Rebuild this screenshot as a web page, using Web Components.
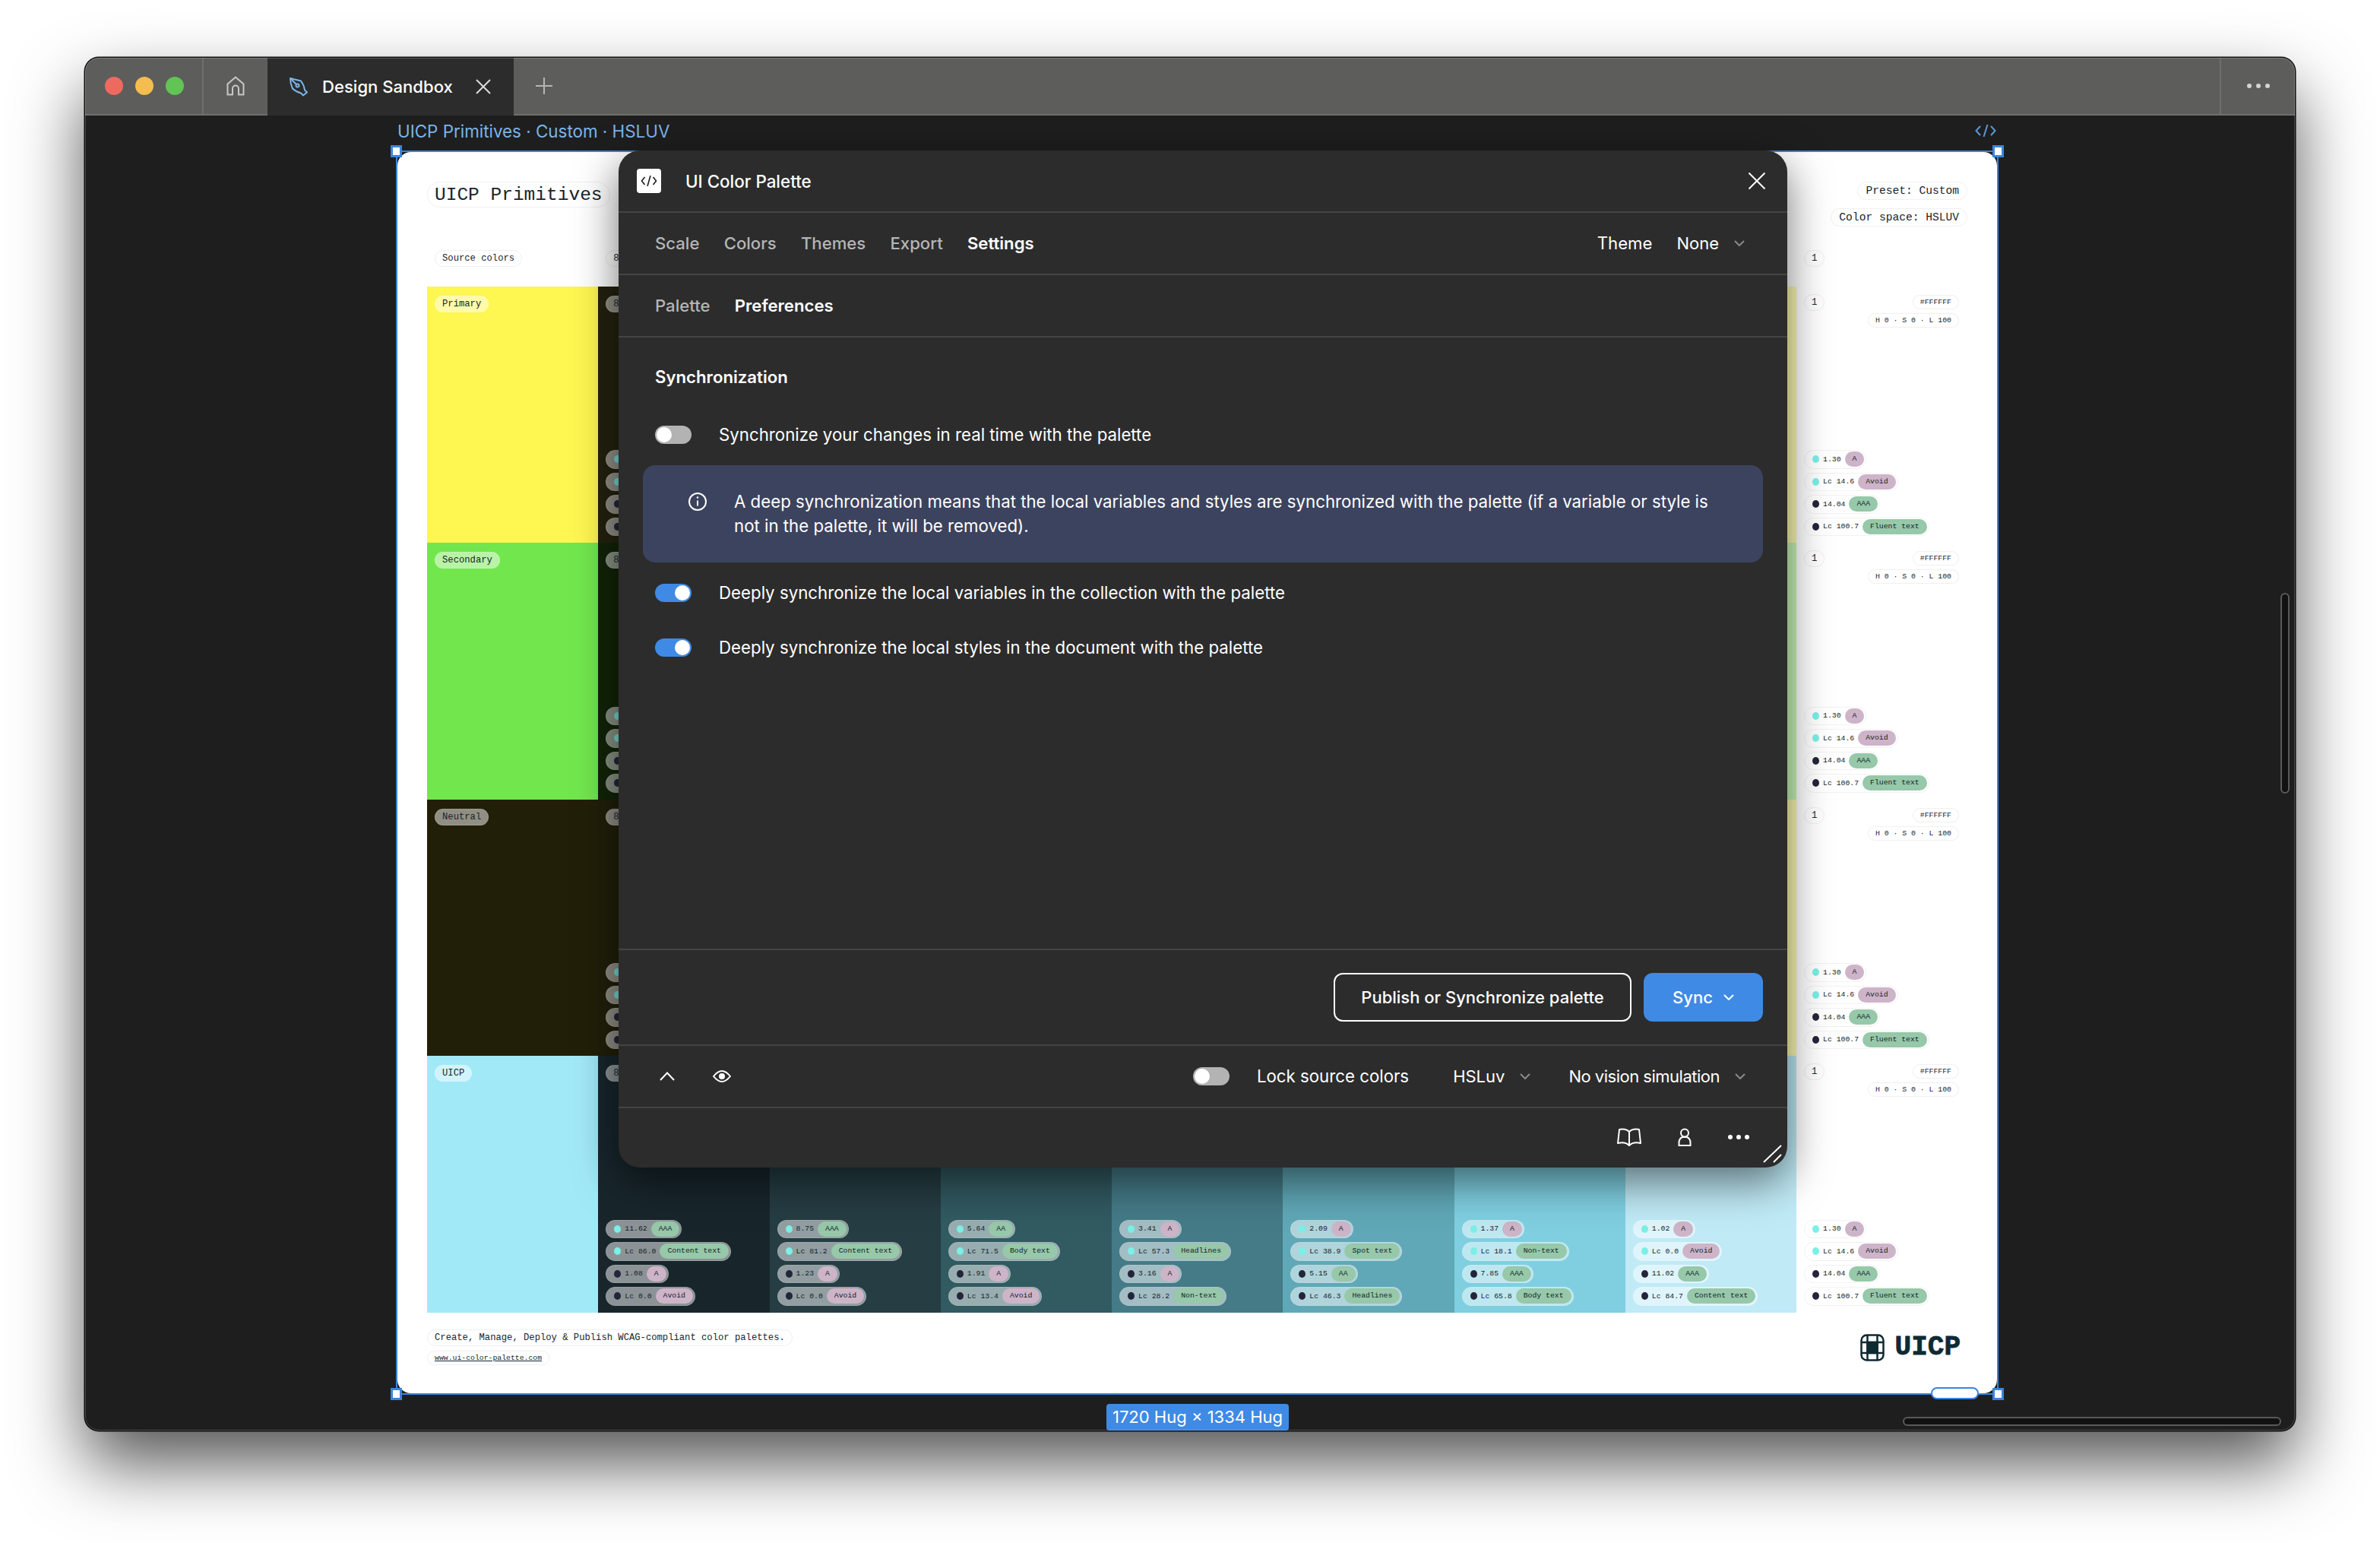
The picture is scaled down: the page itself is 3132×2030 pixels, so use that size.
<!DOCTYPE html>
<html lang="en"><head><meta charset="utf-8"><title>Design Sandbox</title>
<style>html,body{margin:0;padding:0;background:#fff}body{font-family:Inter,"Noto Sans",sans-serif}</style>
<script>
const chev=(c='#8a8a8a')=>`<svg width="14" height="8" viewBox="0 0 14 8" fill="none" stroke="${c}" stroke-width="2"><path d="M1 1l6 6 6-6"/></svg>`;
function define(name,css,render){customElements.define(name,class extends HTMLElement{connectedCallback(){if(this.shadowRoot)return;const r=this.attachShadow({mode:'open'});r.innerHTML=`<style>${css}</style>`+render(this)}})}

define('ui-desktop',`:host{display:block;width:3132px;height:2030px;box-sizing:border-box;padding:76px 0 0 112px;background:#fff;overflow:hidden}`,()=>`<slot></slot>`);

define('ui-window',`:host{display:flex;flex-direction:column;position:relative;width:2908px;height:1806px;background:#1e1e1e;border-radius:18px;box-shadow:0 0 0 1.5px #111,0 44px 90px rgba(0,0,0,.67)}
.rim{position:absolute;inset:0;border-radius:18px;border:1.5px solid rgba(255,255,255,.2);pointer-events:none;z-index:9}`,()=>`<slot></slot><div class="rim"></div>`);

define('ui-tabbar',`:host{display:flex;align-items:stretch;height:76px;box-sizing:border-box;background:#5d5d5c;border-bottom:2px solid #6f6f6e;border-radius:18px 18px 0 0;flex:none;color:#fff}
.lights{display:flex;align-items:center;gap:16px;padding-left:26px;width:156px;box-sizing:border-box;border-right:2px solid #6f6f6e}
.lights i{width:24px;height:24px;border-radius:50%;display:block}
.home{width:84px;display:flex;align-items:center;justify-content:center}
.tab{display:flex;align-items:center;width:324px;box-sizing:border-box;padding-left:28px;background:#2c2c2c;margin-bottom:-2px;font:500 22.1px Inter,sans-serif}
.tab span{margin-left:18px;width:172px;white-space:nowrap}
.tab svg:last-child{margin-left:30px}
.plus{margin-left:29px;display:flex;align-items:center}
.more{margin-left:auto;width:97px;border-left:2px solid #6f6f6e;display:flex;align-items:center;justify-content:center;gap:6px}
.more i{width:6px;height:6px;border-radius:50%;background:#d4d4d4}`,()=>`
<div class="lights"><i style="background:#ee6a5f"></i><i style="background:#f5bd4f"></i><i style="background:#61c454"></i></div>
<div class="home"><svg width="24" height="26" viewBox="0 0 24 26" fill="none" stroke="#c8c8c8" stroke-width="2"><path d="M1.5 24.5V10.5L12 1.5l10.5 9v14H16v-8a4 4 0 0 0-8 0v8z"/></svg></div>
<div class="tab"><svg width="26" height="26" viewBox="0 0 26 26" fill="none" stroke="#7ab6ec" stroke-width="2" stroke-linejoin="round"><path d="M2 2l14 3.5c3 4 4.500 8 5 12l3 3-5 4-3-3c-4-1-8-3-11-6C3 11 2 7 2 2z"/><path d="M2 2l8 8"/><circle cx="11.500" cy="11.500" r="2"/></svg><span>Design Sandbox</span><svg width="20" height="20" viewBox="0 0 20 20" stroke="#dcdcdc" stroke-width="2"><path d="M1 1l18 18M19 1L1 19"/></svg></div>
<div class="plus"><svg width="22" height="22" viewBox="0 0 22 22" stroke="#b5b5b5" stroke-width="2"><path d="M11 0v22M0 11h22"/></svg></div>
<div class="more"><i></i><i></i><i></i></div>`);

define('ui-canvas',`:host{display:block;position:relative;flex:1;padding-left:409px;overflow:visible}
.label{display:flex;justify-content:space-between;align-items:center;width:2110px;height:40px;margin-bottom:6px;padding-right:4px;box-sizing:border-box;color:#7ab4ea;font:400 22.4px Inter,sans-serif;padding-left:2px}
.label svg{display:block;margin-right:0}
.wrap{width:2110px}
.badge{display:table;margin:12px auto 0;background:#3f8ae5;color:#fff;font:400 22px/35px Inter,sans-serif;padding:0 8px;border-radius:4px;white-space:nowrap}
.vs,.hs{position:absolute;background:#111;border:2px solid #5a5a5a;box-sizing:border-box;border-radius:7px}
.vs{left:2889px;top:628px;width:12px;height:264px}
.hs{left:2392px;top:1712px;width:498px;height:12px}`,()=>`<div class="wrap"><div class="label"><span>UICP Primitives · Custom · HSLUV</span><svg width="28" height="16" viewBox="0 0 28 16" fill="none" stroke="#5a98d8" stroke-width="2"><path d="M7 2L1.500 8 7 14M21 2l5.500 6L21 14M16.500 0l-5 16"/></svg></div><slot name="frame"></slot><div class="badge">1720 Hug × 1334 Hug</div></div><slot></slot><div class="vs"></div><div class="hs"></div>`);

define('ui-frame',`:host{display:block;position:relative;width:2109px;height:1637px;box-sizing:border-box;border:2.500px solid #3b84e0}
.h{position:absolute;width:15px;height:16px;background:#fff;border:3px solid #3b84e0;box-sizing:border-box;z-index:3}
.tl{left:-9px;top:-9px}.tr{right:-9px;top:-9px}.bl{left:-9px;bottom:-9px}.br{right:-9px;bottom:-9px}
.p{position:absolute;right:24px;bottom:-8px;width:63px;height:16px;background:#fff;border:2.500px solid #3b84e0;box-sizing:border-box;border-radius:9px;z-index:3}`,()=>`<slot></slot><div class="h tl"></div><div class="h tr"></div><div class="h bl"></div><div class="h br"></div><div class="p"></div>`);

define('ui-pill',`:host{display:inline-flex;align-items:center;box-sizing:border-box;height:22px;padding:0 9px;border-radius:11px;font:400 12.2px "Liberation Mono",monospace;color:#16262c;white-space:nowrap;background:var(--pill-bg,#fff);border:1px solid var(--pill-bd,#f0f0f0)}
:host([size=big]){font-size:24.5px;height:34px;border-radius:17px;padding:0 9px}
:host([size=mid]){font-size:14.600px;height:24px;border-radius:12px;padding:0 10px}
:host([size=sm]){font-size:9.800px;height:19px;border-radius:10px;padding:0 9px}
:host([tint]){--pill-bg:rgba(255,255,255,.5);--pill-bd:rgba(255,255,255,.12)}
:host([wide]){min-width:60px}`,()=>`<slot></slot>`);

define('ui-chip',`:host{display:inline-flex;align-self:flex-start;align-items:center;box-sizing:border-box;height:24.500px;padding:0 2px 0 10px;border-radius:12.500px;background:rgba(255,255,255,.5);border:1px solid rgba(255,255,255,.1);font:400 9.800px "Liberation Mono",monospace;color:#14222a;white-space:nowrap}
:host([solid]){background:#fff;border-color:#f2f2f2}
.d{width:9px;height:10px;border-radius:50%;flex:none;margin-right:5px}
.v{margin-right:5px}
.t{height:20px;line-height:20px;padding:0 10px;border-radius:10px}
.b{width:60px;height:20px}`,h=>{const g=h.getAttribute('tag');const good=/AAA|AA|text|Headlines|Non-text/.test(g||'')&&g!=='A';const bg=good?'#96c8a9':'#ceb4c8';
if(!g)return `<i class="d" style="background:${h.getAttribute('dot')=='d'?'#24253a':'#6fdcd6'}"></i><span class="b"></span>`;
return `<i class="d" style="background:${h.getAttribute('dot')=='d'?'#24253a':'#7cefe6'}"></i><span class="v">${h.getAttribute('val')}</span><span class="t" style="background:${bg}">${g}</span>`});

const data=[
[['11.62','AAA'],['Lc 86.0','Content text'],['1.08','A'],['Lc 0.0','Avoid']],
[['8.75','AAA'],['Lc 81.2','Content text'],['1.23','A'],['Lc 0.0','Avoid']],
[['5.64','AA'],['Lc 71.5','Body text'],['1.91','A'],['Lc 13.4','Avoid']],
[['3.41','A'],['Lc 57.3','Headlines'],['3.16','A'],['Lc 28.2','Non-text']],
[['2.09','A'],['Lc 38.9','Spot text'],['5.15','AA'],['Lc 46.3','Headlines']],
[['1.37','A'],['Lc 18.1','Non-text'],['7.85','AAA'],['Lc 65.8','Body text']],
[['1.02','A'],['Lc 0.0','Avoid'],['11.02','AAA'],['Lc 84.7','Content text']]];
const white=[['1.30','A'],['Lc 14.6','Avoid'],['14.04','AAA'],['Lc 100.7','Fluent text']];
const rows=[
{n:'Primary',s:'#fef651',c:['#23220f','#3a3a18','#5c5a26','#8a8738','#b5b14a','#dcd75c','#fdfbb0']},
{n:'Secondary',s:'#72e74d',c:['#122408','#1f3a10','#2f5a1a','#458a26','#5ab532','#6cd53e','#c8f7b8']},
{n:'Neutral',s:'#221f08',c:['#211f0a','#3a3a18','#5c5a26','#8a8738','#b5b14a','#dcd75c','#fdfbb0']},
{n:'UICP',s:'#a2e9f8',c:['#18262c','#253d43','#315a61','#447b87','#60a8b7','#7fcfe1','#bfeaf6']}];
const chips=(arr,extra='')=>arr.map((x,i)=>`<ui-chip dot="${i<2?'l':'d'}" val="${x[0]}" tag="${x[1]}" ${extra}></ui-chip>`).join('');

define('palette-sheet',`:host{display:block;height:100%;box-sizing:border-box;background:#fff;border-radius:18px;padding:38px 39px 0;color:#16262c}
.top{display:flex;justify-content:space-between;align-items:flex-start;height:61px}
.top>ui-pill{margin-top:1px}
.right{display:flex;flex-direction:column;align-items:flex-end;gap:11px;margin-top:1px}
.grid{display:grid;grid-template-columns:repeat(8,225.25px) 225px;grid-template-rows:22px 27.500px repeat(4,337.500px);margin-top:28px}
.hd{padding-left:10px;grid-row:1}
.hd.last{grid-column:9}
.c{box-sizing:border-box;padding:10px;display:flex;flex-direction:column;justify-content:space-between;overflow:hidden;min-width:0}
.stack{display:flex;flex-direction:column;gap:5px;margin-bottom:-1px}
.head{display:flex;justify-content:space-between;align-items:flex-start;margin-right:1px}
.hexes{display:flex;flex-direction:column;align-items:flex-end;gap:5px;margin-top:1px}
.foot{display:flex;justify-content:space-between;margin-top:22px;width:2018px}
.fl{display:flex;flex-direction:column;align-items:flex-start;gap:6px}
.fl a{color:inherit;text-decoration:underline;font-size:9.800px}
.logo{display:flex;align-items:center;gap:14px;font:700 36px/36px "Liberation Mono",monospace;color:#0e2a33;margin-top:2px;-webkit-text-stroke:.8px #0e2a33}`,()=>{
let g=`<div class="hd" style="grid-column:1"><ui-pill>Source colors</ui-pill></div><div class="hd" style="grid-column:2"><ui-pill wide>8</ui-pill></div><div class="hd last"><ui-pill>1</ui-pill></div>`;
rows.forEach((r,ri)=>{
 const R=`grid-row:${ri+3};`;
 g+=`<div class="c" style="${R}grid-column:1;background:${r.s}"><div><ui-pill tint>${r.n}</ui-pill></div></div>`;
 r.c.forEach((col,ci)=>{
  const isLast=ri===3;
  let inner='';
  if(ci===0) inner+=`<div><ui-pill tint wide>8</ui-pill></div>`; else inner+='<div></div>';
  if(isLast) inner+=`<div class="stack">${chips(data[ci])}</div>`;
  else if(ci===0) inner+=`<div class="stack">${[0,1,2,3].map(i=>`<ui-chip dot="${i<2?'l':'d'}"></ui-chip>`).join('')}</div>`;
  g+=`<div class="c" style="${R}grid-column:${ci+2};background:${col}">${inner}</div>`;
 });
 g+=`<div class="c" style="${R}grid-column:9"><div class="head"><ui-pill>1</ui-pill><div class="hexes"><ui-pill size="sm">#FFFFFF</ui-pill><ui-pill size="sm">H 0 · S 0 · L 100</ui-pill></div></div><div class="stack">${chips(white,'solid')}</div></div>`;
});
return `<div class="top"><ui-pill size="big">UICP Primitives</ui-pill><div class="right"><ui-pill size="mid">Preset: Custom</ui-pill><ui-pill size="mid">Color space: HSLUV</ui-pill></div></div>
<div class="grid">${g}</div>
<div class="foot"><div class="fl"><ui-pill>Create, Manage, Deploy &amp; Publish WCAG-compliant color palettes.</ui-pill><ui-pill size="sm"><a href="#">www.ui-color-palette.com</a></ui-pill></div>
<div class="logo"><svg width="32" height="36" viewBox="0 0 32 36" fill="none" stroke="#0e2a33" stroke-width="2.500"><rect x="1.500" y="1.500" width="29" height="33" rx="7"/><path d="M9.500 2v32M22.500 2v32M2 11h28M2 25h28"/><rect x="9.500" y="11" width="13" height="14" fill="#0e2a33"/></svg><span>UICP</span></div></div>`});

define('ui-toggle',`:host{display:flex;align-items:center;font:400 22.25px/28px Inter,sans-serif;color:#fff;gap:36px;white-space:nowrap}
.t{width:48px;height:24px;border-radius:12px;background:#b3b3b3;position:relative;flex:none}
.t i{position:absolute;top:2px;left:2px;width:20px;height:20px;border-radius:50%;background:#fff}
:host([on]) .t{background:#3f8ae5}
:host([on]) .t i{left:26px}`,()=>`<span class="t"><i></i></span><span><slot></slot></span>`);

define('ui-select',`:host{display:flex;align-items:center;gap:20px;font:400 22px Inter,sans-serif;color:#fff;white-space:nowrap}
svg{display:block}`,()=>`<slot></slot>${chev()}`);

define('ui-modal',`:host{position:absolute;left:702px;top:46px;width:1538px;height:1338px;display:flex;flex-direction:column;box-sizing:border-box;background:#2c2c2c;border-radius:28px;box-shadow:0 18px 56px rgba(0,0,0,.55);color:#fff;font:400 22px Inter,sans-serif;z-index:4}
.row{display:flex;align-items:center;height:82px;box-sizing:border-box;border-bottom:2px solid #444;flex:none}
.hdr{padding:0 28px 0 24px}
.logo{width:32px;height:32px;background:#fff;border-radius:4px;display:flex;align-items:center;justify-content:center}
.hdr b{font-weight:500;margin-left:32px;font-size:22.400px}
.close{margin-left:auto;margin-right:0}
.nav{padding:0 48px;gap:32.200px;color:#b5b5b5;font-weight:500;font-size:22.150px}
.nav .on{color:#fff;font-weight:600}
.nav .th{margin-left:auto;display:flex;align-items:center;gap:32px;color:#fff;font-weight:400}
.nav ui-select{margin-right:8px}
.body{flex:1;padding:38px 32px 0;min-height:0}
h2{margin:0 0 0 16px;font:600 22.200px/28px Inter,sans-serif}
.s1{margin:48px 0 0 16px}
.info{display:flex;gap:36px;background:#3c435e;border-radius:16px;margin-top:26px;padding:32px 60px 32px 60px;line-height:32px;font-size:22.250px}
.info svg{flex:none;margin-top:4px}
.s2{margin:26px 0 0 16px}.s3{margin:44px 0 0 16px}
.acts{height:128px;border-top:2px solid #444;justify-content:flex-end;padding-right:32px;gap:16px}
.btn{height:64px;box-sizing:border-box;border-radius:12px;display:flex;align-items:center;justify-content:center;font-weight:500;font-size:22px}
.p{width:392px;border:2px solid #fff}
.sy{width:157px;background:#3f8ae5;gap:14px}
.bar{padding:0 55px 0 54px}
.bar svg.e{margin-left:50px}
.bar .r{margin-left:auto;display:flex;align-items:center}
.bar .h{margin-left:58px}.bar .n{margin-left:50px;letter-spacing:-.5px}
.ft{flex:none;height:78px;display:flex;align-items:center;justify-content:flex-end;padding:0 50px 2px 0;box-sizing:border-box;gap:48px}
.dots{display:flex;gap:5px}.dots i{width:6px;height:6px;border-radius:50%;background:#fff}
.grip{position:absolute;right:6px;bottom:6px}`,()=>`
<div class="row hdr"><span class="logo"><svg width="22" height="14" viewBox="0 0 22 14" fill="none" stroke="#1c1c1c" stroke-width="1.600"><path d="M5.500 2L1.500 7l4 5M16.500 2l4 5-4 5M13 0L9 14"/></svg></span><b>UI Color Palette</b><svg class="close" width="24" height="24" viewBox="0 0 24 24" stroke="#fff" stroke-width="2"><path d="M1.500 1.500l21 21M22.500 1.500l-21 21"/></svg></div>
<div class="row nav"><span>Scale</span><span>Colors</span><span>Themes</span><span>Export</span><span class="on">Settings</span><div class="th"><span>Theme</span><ui-select>None</ui-select></div></div>
<div class="row nav"><span>Palette</span><span class="on">Preferences</span></div>
<div class="body"><h2>Synchronization</h2>
<ui-toggle class="s1">Synchronize your changes in real time with the palette</ui-toggle>
<div class="info"><svg width="24" height="24" viewBox="0 0 24 24" fill="none" stroke="#fff" stroke-width="2"><circle cx="12" cy="12" r="11"/><path d="M12 10.500v7"/><circle cx="12" cy="6.500" r="1.300" fill="#fff" stroke="none"/></svg><span>A deep synchronization means that the local variables and styles are synchronized with the palette (if a variable or style is not in the palette, it will be removed).</span></div>
<ui-toggle class="s2" on>Deeply synchronize the local variables in the collection with the palette</ui-toggle>
<ui-toggle class="s3" on>Deeply synchronize the local styles in the document with the palette</ui-toggle></div>
<div class="row acts"><div class="btn p">Publish or Synchronize palette</div><div class="btn sy">Sync ${chev('#fff')}</div></div>
<div class="row bar"><svg width="20" height="12" viewBox="0 0 20 12" fill="none" stroke="#fff" stroke-width="2"><path d="M1 11l9-9.500 9 9.500"/></svg><svg class="e" width="24" height="16" viewBox="0 0 24 16" fill="none" stroke="#fff" stroke-width="2"><path d="M1 8c4-5 8-7 11-7s7 2 11 7c-4 5-8 7-11 7S5 13 1 8z"/><circle cx="12" cy="8" r="4" fill="#fff" stroke="none"/></svg>
<div class="r"><ui-toggle>Lock source colors</ui-toggle><ui-select class="h">HSLuv</ui-select><ui-select class="n">No vision simulation</ui-select></div></div>
<div class="ft"><svg width="32" height="24" viewBox="0 0 32 24" fill="none" stroke="#fff" stroke-width="2" stroke-linejoin="round"><path d="M16 5C13 1.500 7 1 3 2L1 20c6-1.500 11-1 15 3 4-4 9-4.500 15-3L29 2c-4-1-10-.5-13 3zM16 5v18"/></svg><svg width="18" height="24" viewBox="0 0 18 24" fill="none" stroke="#fff" stroke-width="2"><circle cx="9" cy="6.500" r="5"/><path d="M1.500 23v-3.500Q1.500 14 6 12h6q4.500 2 4.500 7.500V23z"/></svg><div class="dots"><i></i><i></i><i></i></div></div>
<svg class="grip" width="26" height="24" viewBox="0 0 26 24" stroke="#fff" stroke-width="2"><path d="M1 23L24 1M14 23l10-10"/></svg>`);
</script></head>
<body>
<ui-desktop><ui-window><ui-tabbar></ui-tabbar><ui-canvas><ui-frame slot="frame"><palette-sheet></palette-sheet></ui-frame><ui-modal></ui-modal></ui-canvas></ui-window></ui-desktop>
</body></html>
